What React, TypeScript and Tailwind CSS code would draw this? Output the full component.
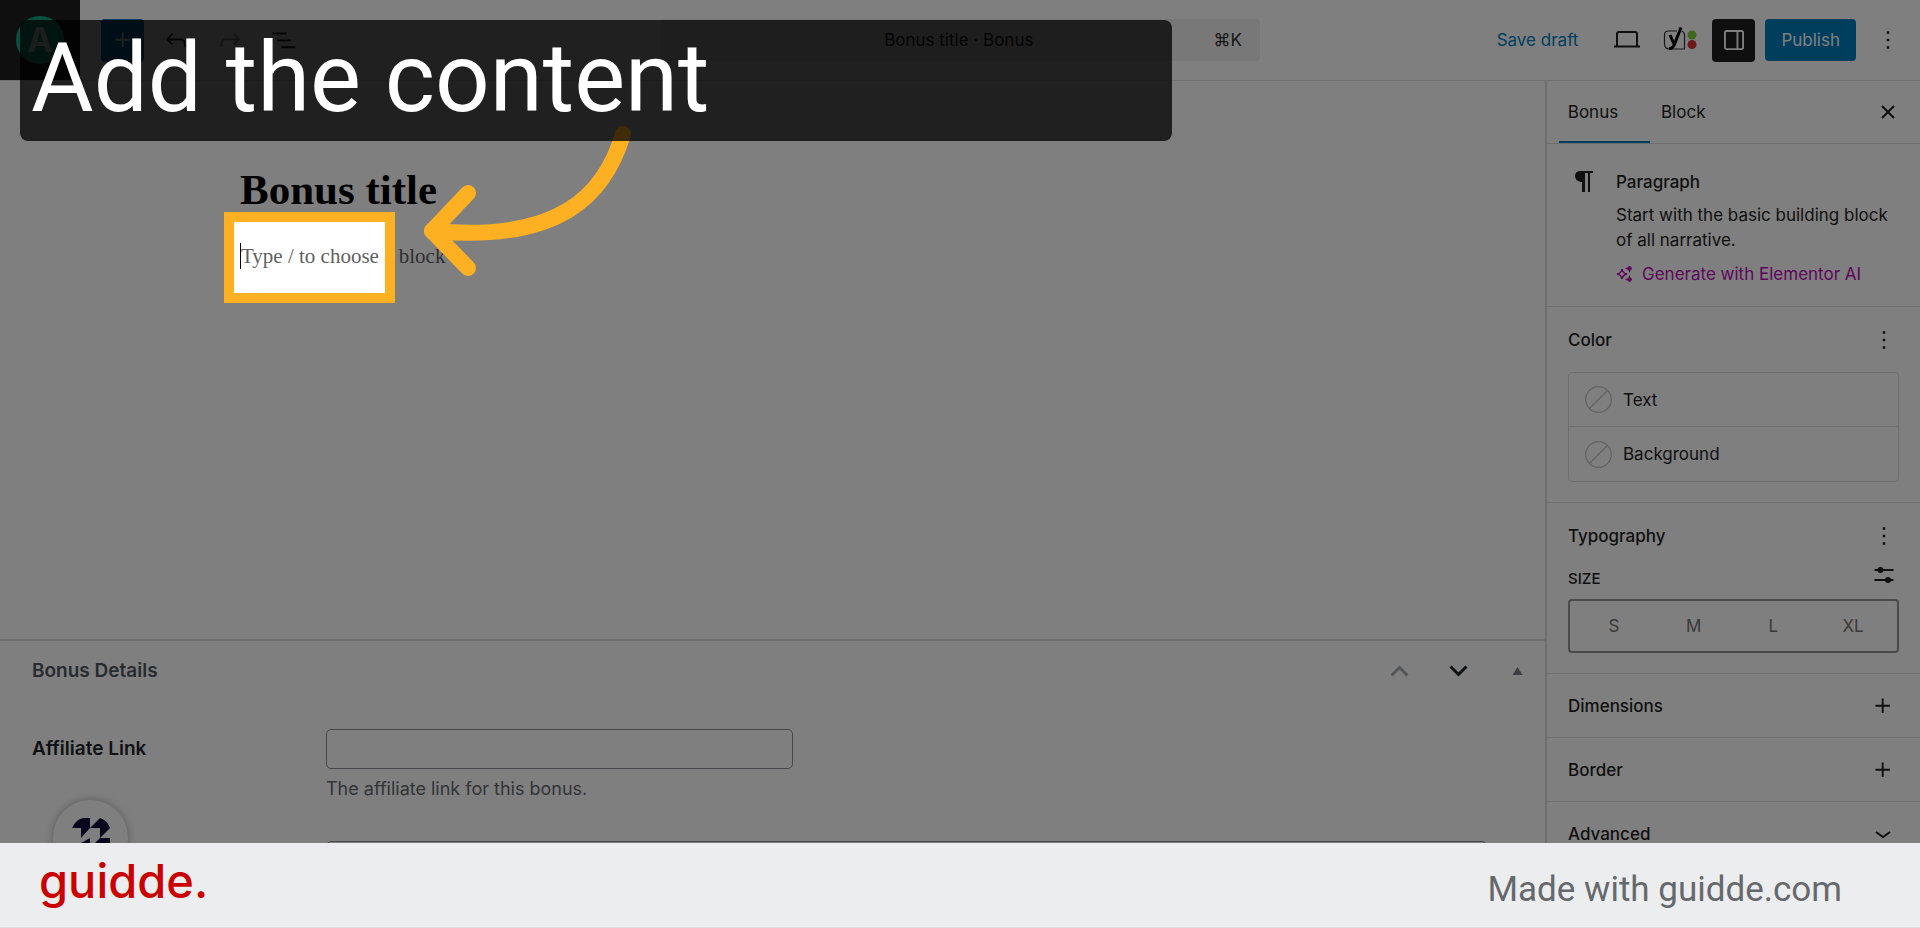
import { ReactNode } from 'react';

const sizes = ['S', 'M', 'L', 'XL'];

function Dots() {
    return (
        <svg width="30" height="30" viewBox="0 0 24 24" fill="currentColor">
            <path d="M13 19h-2v-2h2v2zm0-6h-2v-2h2v2zm0-6h-2V5h2v2z" />
        </svg>
    );
}

function Plus() {
    return (
        <svg width="30" height="30" viewBox="0 0 24 24" fill="currentColor">
            <path d="M11 12.5V17.5H12.5V12.5H17.5V11H12.5V6H11V11H6V12.5H11Z" />
        </svg>
    );
}

function PanelRow({ title, children }: { title: string; children: ReactNode }) {
    return (
        <button className="flex h-16 w-full shrink-0 items-center justify-between border-b border-[#e0e0e0] pl-[21px] pr-[22px] font-medium">
            {title}
            {children}
        </button>
    );
}

function ColorRow({ label }: { label: string }) {
    return (
        <button className="flex h-[54px] w-full items-center gap-[11px] px-4">
            <svg width="27" height="27" viewBox="0 0 27 27" fill="none" stroke="#c4c4c4" strokeWidth="1.2">
                <circle cx="13.5" cy="13.5" r="12.8" />
                <path d="M4.5 22.5l18-18" />
            </svg>
            {label}
        </button>
    );
}

function Header() {
    return (
        <header className="flex h-[81px] shrink-0 items-center border-b border-[#e0e0e0]">
            <div className="flex flex-1 items-center">
                <a href="#" aria-label="Dashboard" className="flex h-20 w-20 items-center justify-center bg-[#1e1e1e]">
                    <span className="flex h-12 w-12 items-center justify-center rounded-full bg-[#12a583] text-[34px] font-bold leading-none text-[#d5e8e4]">A</span>
                </a>
                <button aria-label="Add block" className="ml-[21px] flex h-[43px] w-[43px] items-center justify-center rounded-sm bg-[#007cba] text-white">
                    <Plus />
                </button>
                <button aria-label="Undo" className="ml-[17px]">
                    <svg width="30" height="30" viewBox="0 0 24 24" fill="currentColor">
                        <path d="M18.3 11.7c-.6-.6-1.4-.9-2.3-.9H6.7l2.9-3.3-1.1-1-4.5 5L8.5 16l1-1-2.7-2.7H16c.5 0 .9.2 1.3.5 1 1 1 3.4 1 4.5v.3h1.5v-.2c0-1.5 0-4.3-1.5-5.7z" />
                    </svg>
                </button>
                <button aria-label="Redo" className="ml-6 text-[#949494]">
                    <svg width="30" height="30" viewBox="0 0 24 24" fill="currentColor">
                        <path d="M15.6 6.5l-1.1 1 2.9 3.3H8c-.9 0-1.7.3-2.3.9-1.4 1.5-1.4 4.2-1.4 5.6v.2h1.5v-.3c0-1.1 0-3.5 1-4.5.3-.3.7-.5 1.3-.5h9.2L14.5 15l1.1 1.1 4.6-4.6-4.6-5z" />
                    </svg>
                </button>
                <button aria-label="Document overview" className="ml-6">
                    <svg width="30" height="30" viewBox="0 0 24 24" fill="currentColor">
                        <path d="M3 6h11v1.5H3V6zm3.5 5.5h11V13h-11v-1.5zM21 17H10v1.5h11V17z" />
                    </svg>
                </button>
            </div>
            <button className="flex h-[42px] w-[600px] items-center rounded bg-[#f0f0f0] pr-[18px]">
                <span className="flex-1 pl-11">Bonus title · Bonus</span>
                <span className="text-[#2f2f2f]">⌘K</span>
            </button>
            <div className="flex flex-1 items-center justify-end">
                <button className="mr-[33px] text-[#007cba]">Save draft</button>
                <button aria-label="Preview">
                    <svg width="32" height="32" viewBox="0 0 32 32" fill="none" stroke="currentColor" strokeWidth="2">
                        <path d="M6 22V10q0-2 2-2h16q2 0 2 2v12M3 22.5h26" />
                    </svg>
                </button>
                <button aria-label="Yoast SEO" className="ml-5">
                    <svg width="34" height="28" viewBox="0 0 34 28">
                        <path d="M14 5H6Q1.5 5 1.5 9v9q0 5 5 5H21.5V9q0-3-3-4" fill="none" stroke="#333" strokeWidth="1.2" />
                        <path d="M7 9l4.500 10M18 1.500L12 17Q10 23 6 22.500" fill="none" stroke="#000" strokeWidth="3" />
                        <circle cx="29" cy="9" r="4.500" fill="#7ad03a" />
                        <circle cx="29" cy="18.500" r="4.500" fill="#dc3232" />
                    </svg>
                </button>
                <button aria-label="Settings" className="ml-[15px] flex h-[43px] w-[43px] items-center justify-center rounded-sm bg-[#1e1e1e] text-white">
                    <svg width="30" height="30" viewBox="0 0 24 24" fill="currentColor">
                        <path fillRule="evenodd" d="M18 4H6c-1.100 0-2 .9-2 2v12c0 1.100.9 2 2 2h12c1.100 0 2-.9 2-2V6c0-1.100-.9-2-2-2zm-4 14.500H6c-.3 0-.5-.2-.5-.5V6c0-.3.2-.5.5-.5h8v13zm4.500-.5c0 .3-.2.500-.5.500h-2.500v-13H18c.3 0 .5.200.5.500v12z" />
                    </svg>
                </button>
                <button className="ml-[10px] h-[42px] rounded-sm bg-[#007cba] px-4 text-white">Publish</button>
                <button aria-label="Options" className="mx-[17px]">
                    <Dots />
                </button>
            </div>
        </header>
    );
}

// dims everything around the active step and points an arrow at it
function Spotlight() {
    return (
        <>
            <div className="absolute -left-4 -top-[31px] z-10 h-[91px] w-[171px] border-[10px] border-[#fdb022] shadow-[0_0_0_2400px_rgba(0,0,0,0.5)]" />
            <svg className="absolute left-[180px] -top-[123px] z-10" width="220" height="170" viewBox="420 120 220 170" fill="none" stroke="#fdb022" strokeWidth="16" strokeLinecap="round" strokeLinejoin="round">
                <path d="M623 134C605 195 560 243 432 231" />
                <path d="M468 193L432 231L468 268" />
            </svg>
        </>
    );
}

function Metaboxes() {
    return (
        <section className="relative h-[204px] shrink-0 border-t-2 border-[#ddd] px-8 text-lg text-[#1d2327]">
            <div className="flex h-[60px] items-center justify-between">
                <h2 className="text-[19px] font-semibold text-[#50575e]">Bonus Details</h2>
                <div className="-mr-[18px] flex items-center">
                    <button aria-label="Move up" className="px-5 text-[#a7aaad]">
                        <svg width="19" height="12" viewBox="0 0 19 12" fill="none" stroke="currentColor" strokeWidth="3">
                            <path d="M1.5 10.5l8-8 8 8" />
                        </svg>
                    </button>
                    <button aria-label="Move down" className="px-5">
                        <svg width="19" height="12" viewBox="0 0 19 12" fill="none" stroke="currentColor" strokeWidth="3">
                            <path d="M1.5 1.5l8 8 8-8" />
                        </svg>
                    </button>
                    <button aria-label="Toggle panel" className="pl-6 pr-2 text-[#787c82]">
                        <svg width="11" height="8" viewBox="0 0 10 8" fill="currentColor">
                            <path d="M5 0l5 8H0z" />
                        </svg>
                    </button>
                </div>
            </div>
            <div className="flex pt-7">
                <label htmlFor="affiliate" className="w-[294px] pt-[5px] text-[19px] font-semibold">Affiliate Link</label>
                <div className="flex-1">
                    <input id="affiliate" type="url" className="block h-10 w-[467px] rounded-[5px] border border-[#8c8f94] px-2" />
                    <p className="mt-[6px] text-[#646970]">The affiliate link for this bonus.</p>
                </div>
            </div>
            <div className="ml-[294px] mr-[26px] mt-[38px]">
                <input aria-label="Bonus code" className="block h-10 w-full rounded-[5px] border border-[#8c8f94] px-2" />
            </div>
            <button aria-label="Help" className="absolute -bottom-8 left-[53px] flex h-[75px] w-[75px] items-center justify-center rounded-full bg-white shadow-[0_0_10px_rgba(0,0,0,0.3)]">
                <svg width="38" height="40" viewBox="0 0 38 40" fill="#120f3a">
                    <path d="M0 10Q5 0 12 0h6v10L9 20V10z" />
                    <path d="M18 10L28 0Q35 2 38 10L28 20V10z" />
                    <path d="M18 20v10L9 40V30H0z" />
                    <path d="M38 20v10L28 40V30H18l10-10z" />
                </svg>
            </button>
        </section>
    );
}

function Sidebar() {
    return (
        <aside className="flex w-[375px] shrink-0 flex-col border-l-2 border-[#ddd]">
            <div className="flex h-[63px] shrink-0 items-stretch border-b border-[#ddd] pl-3 pr-[17px]">
                <button className="w-[91px] border-b-2 border-[#007cba] pr-[23px] pt-[2px]">Bonus</button>
                <button className="px-[11px]">Block</button>
                <button aria-label="Close settings" className="ml-auto">
                    <svg width="30" height="30" viewBox="0 0 30 30" fill="none" stroke="currentColor" strokeWidth="2">
                        <path d="M9 9l12 12M21 9L9 21" />
                    </svg>
                </button>
            </div>
            <div className="flex h-[163px] shrink-0 border-b border-[#e0e0e0] pl-[21px] pr-6 pt-[23px]">
                <svg className="shrink-0" width="30" height="30" viewBox="0 0 30 30" fill="currentColor">
                    <path d="M13 4H25v2h-3v19h-2V6h-3v19h-3V15h-1q-6-1-6-6 0-5 6-5z" />
                </svg>
                <div className="ml-[18px]">
                    <h2 className="mt-[3px] font-medium leading-6">Paragraph</h2>
                    <p className="mt-[9px] leading-[25px]">Start with the basic building block of all narrative.</p>
                    <button className="mt-[9px] flex items-center gap-[10px] whitespace-nowrap leading-6 text-[#c00bb9]">
                        <svg width="16" height="16" viewBox="0 0 16 16" fill="none" stroke="currentColor" strokeWidth="1.5">
                            <path d="M6 3q.7 4.300 5 5-4.300.7-5 5-.7-4.300-5-5 4.300-.7 5-5z" />
                            <path d="M13.500 0l.7 1.800 1.800.7-1.800.7-.7 1.800-.7-1.800-1.800-.7 1.800-.7zM13.500 11l.7 1.800 1.800.7-1.800.7-.7 1.800-.7-1.800-1.800-.7 1.800-.7z" fill="currentColor" />
                        </svg>
                        Generate with Elementor AI
                    </button>
                </div>
            </div>
            <section className="h-[196px] shrink-0 border-b border-[#e0e0e0] px-[21px]">
                <div className="flex h-[65px] items-center justify-between">
                    <h2 className="font-medium">Color</h2>
                    <button aria-label="Color options">
                        <Dots />
                    </button>
                </div>
                <div className="divide-y divide-[#ddd] rounded-sm border border-[#ddd]">
                    <ColorRow label="Text" />
                    <ColorRow label="Background" />
                </div>
            </section>
            <section className="h-[171px] shrink-0 border-b border-[#e0e0e0] px-[21px]">
                <div className="flex h-[65px] items-center justify-between">
                    <h2 className="font-medium">Typography</h2>
                    <button aria-label="Typography options">
                        <Dots />
                    </button>
                </div>
                <div className="flex h-[31px] items-start justify-between">
                    <span className="text-[15px] font-medium leading-[22px]">SIZE</span>
                    <button aria-label="Set custom size" className="-mt-2">
                        <svg width="30" height="30" viewBox="0 0 30 30" fill="currentColor">
                            <path d="M5.5 9h19v2h-19zM5.5 19h19v2h-19z" />
                            <circle cx="11.5" cy="10" r="3" />
                            <circle cx="19" cy="20" r="3" />
                        </svg>
                    </button>
                </div>
                <div className="grid h-[54px] grid-cols-4 rounded-sm border-2 border-[#949494] px-1 text-[#757575]">
                    {sizes.map((size) => (
                        <button key={size}>{size}</button>
                    ))}
                </div>
            </section>
            <PanelRow title="Dimensions">
                <Plus />
            </PanelRow>
            <PanelRow title="Border">
                <Plus />
            </PanelRow>
            <PanelRow title="Advanced">
                <svg width="30" height="30" viewBox="0 0 30 30" fill="none" stroke="currentColor" strokeWidth="2">
                    <path d="M8 13l7 5 7-5" />
                </svg>
            </PanelRow>
        </aside>
    );
}

export default function App() {
    return (
        <div className="relative flex h-screen flex-col overflow-hidden bg-white font-['Inter','Liberation_Sans',sans-serif] text-[17px] leading-[26px] text-[#1e1e1e]">
            <div className="flex min-h-0 flex-1 flex-col overflow-hidden">
                <Header />
                <div className="flex min-h-0 flex-1">
                    <main className="flex min-w-0 flex-1 flex-col">
                        <div className="min-h-0 flex-1 pl-60 pt-[83px] font-['Liberation_Serif',serif] text-black">
                            <h1 className="text-[43px] font-bold leading-[52px]">Bonus title</h1>
                            <div className="relative mt-[27px]">
                                <p className="border-l border-black text-[21px] leading-[26px] text-[#5f5f5f]">Type / to choose a block</p>
                                <Spotlight />
                            </div>
                        </div>
                        <Metaboxes />
                    </main>
                    <Sidebar />
                </div>
            </div>
            <div className="absolute left-5 top-5 z-20 h-[121px] w-3/5 rounded-lg bg-black/75 px-[11px] font-['Roboto',sans-serif] text-[96px] leading-[116px] text-white">
                Add the content
            </div>
            <footer className="z-20 flex h-[85px] shrink-0 items-center justify-between border-b border-[#dedfe0] bg-[#ecedef] pl-[39px] pr-[78px]">
                <a href="#" className="pb-[10px] text-[47px] font-medium leading-none text-[#cb0000]">guidde.</a>
                <span className="pt-2 font-['Roboto',sans-serif] text-[35px] leading-none text-[#66696c]">Made with guidde.com</span>
            </footer>
        </div>
    );
}
